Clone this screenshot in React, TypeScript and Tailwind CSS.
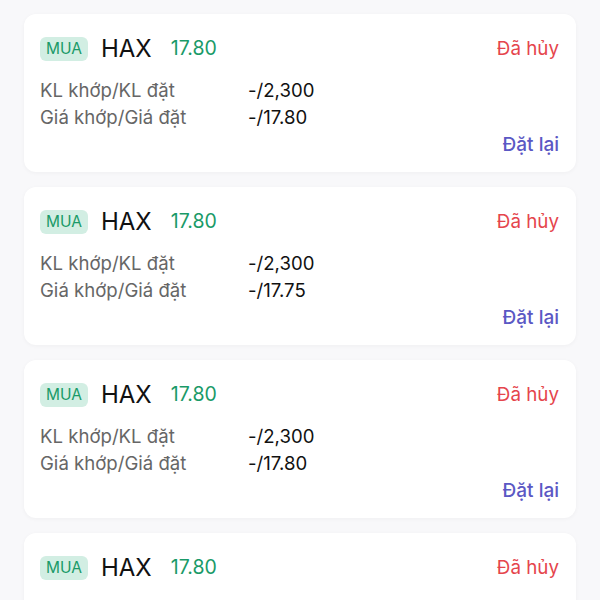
const orders = [
  { price: "17.80", qty: "-/2,300", orderPrice: "-/17.80" },
  { price: "17.80", qty: "-/2,300", orderPrice: "-/17.75" },
  { price: "17.80", qty: "-/2,300", orderPrice: "-/17.80" },
  { price: "17.80", qty: "-/2,300", orderPrice: "-/17.80" },
];

const OrderCard = ({ price, qty, orderPrice }: { price: string; qty: string; orderPrice: string }) => {
  return (
    <div className="bg-white rounded-xl mx-6 px-4 pr-[17px] pt-[22px] pb-[14px] shadow-[0_1px_4px_rgba(0,0,0,0.04)]">
      <div className="flex items-center justify-between h-[26px]">
        <div className="flex items-center">
          <span className="bg-[#d2eee3] text-[#1a9a68] text-[15.5px] rounded-md h-6 px-[6px] flex items-center">MUA</span>
          <span className="ml-[13px] text-[24px] text-[#111]">HAX</span>
          <span className="ml-[19px] text-[19.5px] text-[#1a9a68]">{price}</span>
        </div>
        <span className="text-[18.8px] text-[#e5454c]">Đã hủy</span>
      </div>
      <div className="mt-[15px] text-[18.6px] leading-[27px]">
        <div className="flex">
          <span className="w-[208px] text-[#666]">KL khớp/KL đặt</span>
          <span className="text-[#111]">{qty}</span>
        </div>
        <div className="flex">
          <span className="w-[208px] text-[#666]">Giá khớp/Giá đặt</span>
          <span className="text-[#111]">{orderPrice}</span>
        </div>
      </div>
      <div className="mt-[1px] text-right text-[19px] leading-[26px] font-medium text-[#5b58c4]">Đặt lại</div>
    </div>
  );
};

export default function App() {
  return (
    <div className="w-[600px] h-[600px] overflow-hidden bg-[#f8f8fa] pt-[14px] flex flex-col gap-[15px] font-['Inter',sans-serif]">
      {orders.map((o, i) => (
        <OrderCard key={i} {...o} />
      ))}
    </div>
  );
}
